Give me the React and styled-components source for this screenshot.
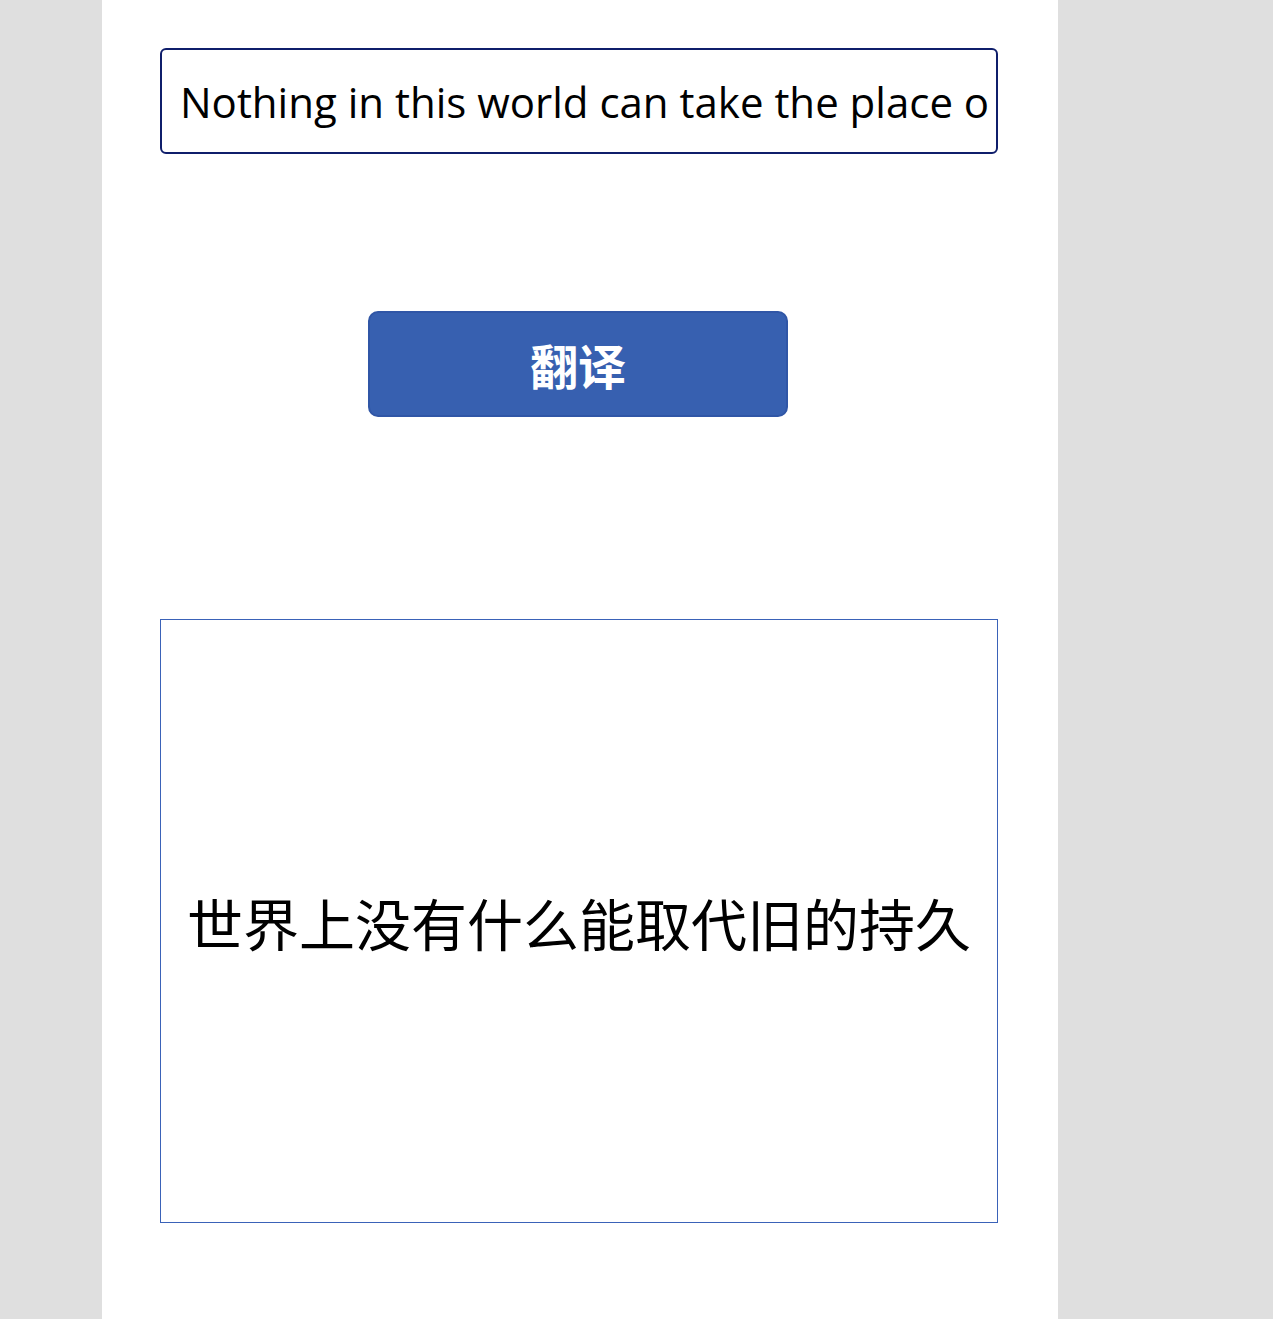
import styled, { createGlobalStyle } from "styled-components";

const GlobalStyle = createGlobalStyle`
  html, body {
    margin: 0;
    padding: 0;
    background: #dfdfdf;
  }
`;

const Page = styled.div`
  display: flex;
  min-height: 1319px;
  padding-left: 102px;
`;

const Panel = styled.main`
  width: 956px;
  background: #ffffff;
  display: flex;
  flex-direction: column;
  align-items: flex-start;
  padding: 48px 0 0 58px;
  box-sizing: border-box;
`;

const SourceInput = styled.input`
  width: 838px;
  height: 106px;
  box-sizing: border-box;
  border: 2px solid #0f1e6b;
  border-radius: 6px;
  padding: 0 8px 0 18px;
  font-family: "Open Sans", "Noto Sans", sans-serif;
  font-size: 42px;
  color: #000;
  background: #fff;
  outline: none;
`;

const TranslateButton = styled.button`
  margin: 157px 0 0 208px;
  width: 420px;
  height: 106px;
  box-sizing: border-box;
  border: 2px solid #3056a6;
  border-radius: 10px;
  background: #3760b0;
  color: #fff;
  font-family: "Noto Sans CJK SC", sans-serif;
  font-weight: 700;
  font-size: 48px;
  cursor: pointer;
`;

const Output = styled.div`
  margin-top: 202px;
  width: 838px;
  height: 604px;
  box-sizing: border-box;
  border: 1px solid #3a62b8;
  display: flex;
  align-items: center;
  justify-content: center;
  font-family: "Noto Sans CJK SC", sans-serif;
  font-size: 56px;
  color: #000;
`;

export default function App() {
  return (
    <>
      <GlobalStyle />
      <Page>
        <Panel>
          <SourceInput
            readOnly
            defaultValue="Nothing in this world can take the place of persistence"
          />
          <TranslateButton>翻译</TranslateButton>
          <Output>世界上没有什么能取代旧的持久</Output>
        </Panel>
      </Page>
    </>
  );
}
